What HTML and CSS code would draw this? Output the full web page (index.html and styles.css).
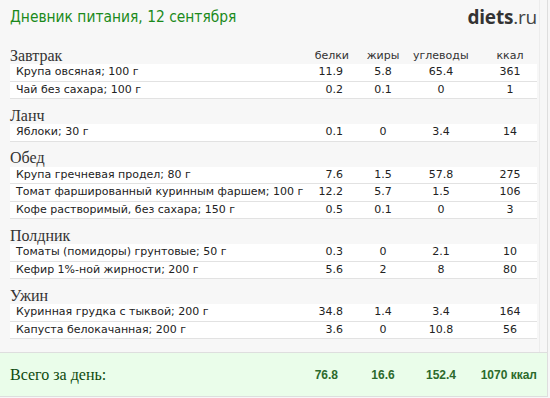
FILE: index.html
```html
<!DOCTYPE html>
<html lang="ru">
<head>
<meta charset="utf-8">
<title>Дневник питания</title>
<link rel="stylesheet" href="styles.css">
</head>
<body>
<div class="page">
  <div class="main">
    <div class="top">
      <div class="title">Дневник питания, 12 сентября</div>
      <div class="logo"><b>diets</b>.ru</div>
    </div>

    <div class="sect">
      <div class="head">
        <div class="meal">Завтрак</div>
        <div class="hb">белки</div>
        <div class="hf">жиры</div>
        <div class="hc">углеводы</div>
        <div class="hk">ккал</div>
      </div>
      <div class="row"><div class="n">Крупа овсяная; 100 г</div><div class="b">11.9</div><div class="f">5.8</div><div class="c">65.4</div><div class="k">361</div></div>
      <div class="row"><div class="n">Чай без сахара; 100 г</div><div class="b">0.2</div><div class="f">0.1</div><div class="c">0</div><div class="k">1</div></div>
    </div>

    <div class="sect">
      <div class="head"><div class="meal">Ланч</div></div>
      <div class="row"><div class="n">Яблоки; 30 г</div><div class="b">0.1</div><div class="f">0</div><div class="c">3.4</div><div class="k">14</div></div>
    </div>

    <div class="sect">
      <div class="head"><div class="meal">Обед</div></div>
      <div class="row"><div class="n">Крупа гречневая продел; 80 г</div><div class="b">7.6</div><div class="f">1.5</div><div class="c">57.8</div><div class="k">275</div></div>
      <div class="row"><div class="n">Томат фаршированный куринным фаршем; 100 г</div><div class="b">12.2</div><div class="f">5.7</div><div class="c">1.5</div><div class="k">106</div></div>
      <div class="row"><div class="n">Кофе растворимый, без сахара; 150 г</div><div class="b">0.5</div><div class="f">0.1</div><div class="c">0</div><div class="k">3</div></div>
    </div>

    <div class="sect">
      <div class="head"><div class="meal">Полдник</div></div>
      <div class="row"><div class="n">Томаты (помидоры) грунтовые; 50 г</div><div class="b">0.3</div><div class="f">0</div><div class="c">2.1</div><div class="k">10</div></div>
      <div class="row"><div class="n">Кефир 1%-ной жирности; 200 г</div><div class="b">5.6</div><div class="f">2</div><div class="c">8</div><div class="k">80</div></div>
    </div>

    <div class="sect">
      <div class="head"><div class="meal">Ужин</div></div>
      <div class="row"><div class="n">Куринная грудка с тыквой; 200 г</div><div class="b">34.8</div><div class="f">1.4</div><div class="c">3.4</div><div class="k">164</div></div>
      <div class="row"><div class="n">Капуста белокачанная; 200 г</div><div class="b">3.6</div><div class="f">0</div><div class="c">10.8</div><div class="k">56</div></div>
    </div>
  </div>

  <div class="total">
    <div class="tn">Всего за день:</div>
    <div class="tb">76.8</div>
    <div class="tf">16.6</div>
    <div class="tc">152.4</div>
    <div class="tk">1070 ккал</div>
  </div>
</div>
</body>
</html>
```

FILE: styles.css
```css
html, body {
  margin: 0;
  padding: 0;
  background: #f7f7f7;
}

.page {
  width: 548px;
  height: 397px;
  box-sizing: border-box;
  border-right: 1px solid #dedede;
  border-bottom: 1px solid #dedede;
  background: #f7f7f7;
  display: flex;
  flex-direction: column;
  font-family: "DejaVu Sans", Verdana, sans-serif;
  color: #222;
}

.main {
  width: 540px;
  height: 352px;
  box-sizing: border-box;
  border-right: 1px solid #ececec;
  padding: 0 2px 0 10px;
}

.top {
  height: 39px;
  display: flex;
  justify-content: space-between;
  align-items: flex-start;
}

.title {
  margin-top: 7px;
  font-family: "DejaVu Sans Condensed", "DejaVu Sans", sans-serif;
  font-size: 15.4px;
  line-height: 20px;
  color: #1b8a1b;
}

.logo {
  margin-top: 5px;
  font-family: "Open Sans", "DejaVu Sans", sans-serif;
  font-size: 19px;
  line-height: 24px;
  color: #444;
  letter-spacing: -0.2px;
}

.logo b {
  font-weight: 700;
  color: #333;
}

.head,
.row,
.total {
  display: grid;
  grid-template-columns: minmax(0, 1fr) 70px 70px 56px 68px;
}

.head {
  height: 25px;
  align-items: end;
  font-size: 11px;
  color: #333;
}

.meal {
  font-family: "Liberation Serif", "Times New Roman", serif;
  font-size: 16px;
  line-height: 17.5px;
  color: #333;
}

.hb, .hf, .hc, .hk {
  line-height: 17.5px;
  text-align: center;
}

.hb {
  text-align: right;
  margin-right: -6px;
}

.hf { padding-left: 10px; }
.hc { padding-right: 10px; }
.hk { padding-left: 14px; }

.row {
  height: 16.5px;
  background: #fff;
  border-bottom: 1px solid #e2e2e2;
  font-size: 11px;
  line-height: 16.5px;
  color: #222;
  align-items: center;
}

.n {
  padding-left: 6px;
  white-space: nowrap;
  overflow: visible;
}

.b { text-align: right; }
.f { text-align: center; padding-left: 10px; }
.c { text-align: center; }
.k { text-align: center; padding-left: 14px; }

.total {
  flex: 1;
  width: 547px;
  box-sizing: border-box;
  border-top: 1px solid #dedede;
  background: #eafdea;
  padding: 0 10px;
  align-items: center;
}

.tn {
  font-family: "Liberation Serif", "Times New Roman", serif;
  font-size: 16px;
  color: #0d4a0d;
}

.tb, .tf, .tc, .tk {
  font-family: "Liberation Sans", Arial, sans-serif;
  font-weight: 700;
  font-size: 12px;
  color: #2c6a2c;
}

.tb { text-align: right; padding-right: 5px; }
.tf { text-align: center; padding-left: 10px; }
.tc { text-align: center; }
.tk { text-align: right; }
```
